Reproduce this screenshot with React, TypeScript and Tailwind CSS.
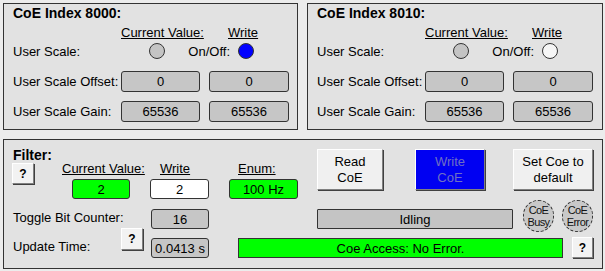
import React from "react";

const font = "font-['Liberation_Sans',Arial,sans-serif]";

function Box({ children, className }: { children?: React.ReactNode; className: string }) {
  return (
    <div className={`flex items-center justify-center rounded-[3px] border border-[#333] text-[13px] leading-[15px] text-black ${className}`}>
      {children}
    </div>
  );
}

function Btn3D({ children, className }: { children?: React.ReactNode; className: string }) {
  return (
    <div
      className={`flex flex-col items-center justify-center border border-t-white border-l-white border-b-[#808080] border-r-[#808080] shadow-[1px_1px_0_#404040] text-center ${className}`}
    >
      {children}
    </div>
  );
}

function CoePanel({ title, writeCircle, className }: { title: string; writeCircle: string; className: string }) {
  return (
    <div className={`h-[127px] border border-[#333] bg-[#e2e2e2] pl-[9px] ${className}`}>
      <div className="mt-[1px] h-[16px] text-[14px] font-bold leading-[16px]">{title}</div>
      <div className="mt-[4px] flex h-[15px] text-[13px] leading-[15px]">
        <div className="w-[108px]" />
        <div className="w-[88px] underline">Current Value:</div>
        <div className="pl-[19px] underline">Write</div>
      </div>
      <div className="mt-[3px] flex h-[16px] items-center text-[13px] leading-[15px]">
        <div className="w-[108px]">User Scale:</div>
        <div className="flex w-[117px] items-center">
          <div className="ml-[28px] h-[16px] w-[16px] rounded-full border border-[#333] bg-[#c4c4c4]" />
          <div className="ml-auto mr-[8px]">On/Off:</div>
        </div>
        <div className={`h-[16px] w-[16px] rounded-full border border-[#333] ${writeCircle}`} />
      </div>
      <div className="mt-[12px] flex h-[21px] items-center text-[13px] leading-[15px]">
        <div className="w-[108px]">User Scale Offset:</div>
        <Box className="h-[21px] w-[79px] bg-[#c6c6c6]">0</Box>
        <Box className="ml-[9px] h-[21px] w-[80px] bg-[#c6c6c6]">0</Box>
      </div>
      <div className="mt-[9px] flex h-[21px] items-center text-[13px] leading-[15px]">
        <div className="w-[108px]">User Scale Gain:</div>
        <Box className="h-[21px] w-[79px] bg-[#c6c6c6]">65536</Box>
        <Box className="ml-[9px] h-[21px] w-[80px] bg-[#c6c6c6]">65536</Box>
      </div>
    </div>
  );
}

function StatusCircle({ top, bottom, className }: { top: string; bottom: string; className: string }) {
  return (
    <div
      className={`flex h-[32px] w-[31px] flex-col items-center justify-center rounded-full border border-dashed border-[#333] bg-[#c8c8c8] text-[11px] leading-[12px] tracking-[-0.6px] text-[#111] ${className}`}
    >
      <div>{top}</div>
      <div>{bottom}</div>
    </div>
  );
}

export default function App() {
  return (
    <div className={`h-[271px] w-[605px] overflow-hidden whitespace-nowrap bg-[#ececec] pl-[3px] pt-[3px] text-black ${font}`}>
      <div className="flex gap-[9px]">
        <CoePanel title="CoE Index 8000:" writeCircle="bg-[#0000ff]" className="w-[295px]" />
        <CoePanel title="CoE Index 8010:" writeCircle="bg-[#f6f6f6]" className="w-[296px]" />
      </div>

      <div className="mt-[9px] h-[130px] w-[600px] border border-[#333] bg-[#e2e2e2]">
        <div className="flex h-[59px]">
          <div className="w-[313px] pt-[8px]">
            <div className="h-[14px] pl-[9px] text-[14px] font-bold leading-[14px]">Filter:</div>
            <div className="flex items-start text-[13px]">
              <Btn3D className="ml-[8px] mt-[1px] h-[21px] w-[22px] bg-[#f2f2f2] text-[12px] font-bold leading-[14px]">?</Btn3D>
              <div className="ml-[28px] w-[81px]">
                <div className="h-[13px] leading-[13px] underline">Current Value:</div>
                <Box className="ml-[10px] mt-[4px] h-[20px] w-[58px] bg-[#00ff00]">2</Box>
              </div>
              <div className="ml-[7px] w-[59px]">
                <div className="h-[13px] pl-[10px] leading-[13px] underline">Write</div>
                <Box className="mt-[4px] h-[20px] w-[59px] bg-white">2</Box>
              </div>
              <div className="ml-[20px] w-[69px]">
                <div className="h-[13px] pl-[9px] leading-[13px] underline">Enum:</div>
                <Box className="mt-[4px] h-[20px] w-[69px] bg-[#00ff00]">100 Hz</Box>
              </div>
            </div>
          </div>
          <div className="mt-[9px] flex text-[13px] leading-[16px]">
            <Btn3D className="h-[41px] w-[66px] bg-[#f0f0f0]">
              <div>Read</div>
              <div>CoE</div>
            </Btn3D>
            <Btn3D className="ml-[32px] h-[41px] w-[70px] bg-[#0000f2] text-[#6f6fc4]">
              <div>Write</div>
              <div>CoE</div>
            </Btn3D>
            <Btn3D className="ml-[28px] h-[41px] w-[80px] bg-[#f0f0f0]">
              <div>Set Coe to</div>
              <div>default</div>
            </Btn3D>
          </div>
        </div>

        <div className="mt-[1px] flex h-[28px] items-start pl-[9px] text-[13px] leading-[15px]">
          <div className="mt-[10px] w-[138px]">Toggle Bit Counter:</div>
          <Box className="mt-[9px] h-[20px] w-[58px] bg-[#c6c6c6]">16</Box>
          <div className="ml-[108px] mt-[9px] flex h-[20px] w-[196px] items-center justify-center rounded-[1px] border border-[#333] bg-[#c4c4c4]">
            Idling
          </div>
          <StatusCircle top="CoE" bottom="Busy" className="ml-[10px]" />
          <StatusCircle top="CoE" bottom="Error" className="ml-[8px]" />
        </div>

        <div className="flex h-[30px] items-start pl-[9px] text-[13px] leading-[15px]">
          <div className="mt-[11px] w-[108px]">Update Time:</div>
          <Btn3D className="h-[22px] w-[22px] bg-[#f2f2f2] text-[12px] font-bold leading-[14px]">?</Btn3D>
          <Box className="ml-[8px] mt-[10px] h-[20px] w-[58px] bg-[#c6c6c6]">0.0413 s</Box>
          <div className="ml-[29px] mt-[10px] flex h-[20px] w-[325px] items-center justify-center border border-[#333] bg-[#00ff00]">
            Coe Access: No Error.
          </div>
          <Btn3D className="ml-[9px] mt-[9px] h-[21px] w-[21px] bg-[#f2f2f2] text-[12px] font-bold leading-[14px]">?</Btn3D>
        </div>
      </div>
    </div>
  );
}
